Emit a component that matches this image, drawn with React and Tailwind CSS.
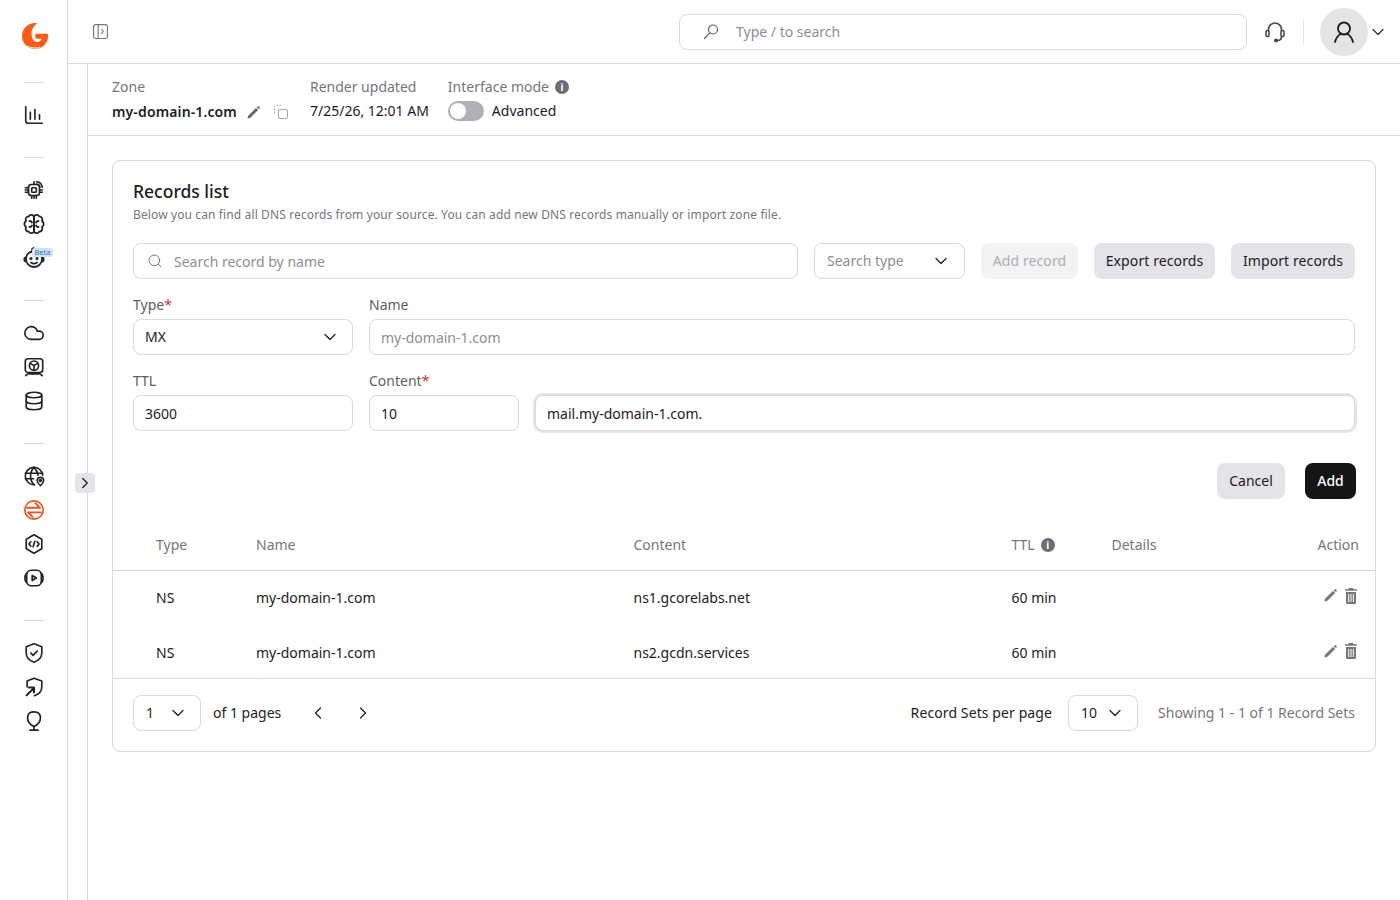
import React from "react";
import { ChevronDown, ChevronLeft, ChevronRight, Search, Cloud } from "lucide-react";

const Icon = ({ children, className = "w-[22px] h-[22px] text-[#222]" }) => (
  <svg viewBox="0 0 24 24" fill="none" stroke="currentColor" strokeWidth="1.8" strokeLinecap="round" strokeLinejoin="round" className={className}>
    {children}
  </svg>
);

const Logo = () => (
  <svg viewBox="0 0 26 30" className="w-[26px] h-[30px]">
    <circle cx="13" cy="15" r="13" fill="#ff5a14" />
    <path d="M20.500 0 C14 1.500 9.500 6.500 9.500 13 C9.500 17.500 12 21 15.500 21 C17.500 21 19 19.800 19.500 17.800 L14.500 17.800 C13 16.500 12.800 14.500 13.800 12.800 L27 12.800 L27 0 Z" fill="#fff" />
    <path d="M3 23.500 C8 27 15 27.500 21 25 C15 28.800 8 28.500 3 23.500 Z" fill="#fff" />
  </svg>
);

const ChartIcon = () => (
  <Icon>
    <path d="M3 3v15.500A2.500 2.500 0 0 0 5.500 21H21" />
    <path d="M8 16.500V9M13 16.500V6M18 16.500v-5" />
  </Icon>
);

const ChipIcon = () => (
  <Icon>
    <rect x="6" y="6" width="12" height="12" rx="3" />
    <rect x="9.500" y="9.500" width="5" height="5" rx="1" />
    <path d="M2.500 9.500H6M2.500 12H6M2.500 14.500H6M9.500 18v3M12 18v3M14.500 18v3M18 14.500h3M18 12h3M12 6V3" />
    <path d="M15 3c3 .3 5.500 2.800 6 6M15 5.500c1.500.2 3 1.600 3.500 3" />
  </Icon>
);

const BrainIcon = () => (
  <Icon className="w-6 h-6 text-[#222]">
    <path d="M12 4.800C11.500 2.500 8 2 6.800 4.300 4.300 4.300 3 6.800 4 9 1.800 10.300 1.800 13.700 4 15c-1 2.300.3 4.700 2.800 4.700C8 22 11.500 21.500 12 19.200z" />
    <path d="M12 4.800C12.500 2.500 16 2 17.200 4.300 19.700 4.300 21 6.800 20 9c2.200 1.300 2.200 4.700 0 6 1 2.300-.3 4.700-2.800 4.700C16 22 12.500 21.500 12 19.200z" />
    <path d="M12 4.800v14.400M7.500 9c1.200 0 2 .5 2.500 1.500M16.500 9c-1.200 0-2 .5-2.500 1.500M7.500 15c1.200 0 2-.5 2.500-1.500M16.500 15c-1.200 0-2-.5-2.500-1.500" />
  </Icon>
);

const BotIcon = () => (
  <Icon className="w-6 h-6 text-[#222]">
    <path d="M11 5.500c-4.300.4-7 3.600-7 7.500 0 4.300 3.500 8 8 8s8-3.700 8-8c0-1.200-.3-2.300-.8-3.300" />
    <path d="M11 5.500C9.500 4.500 9.700 2.500 11.500 2" />
    <path d="M4 11.500c-2 0-2.500 3.500 0 4M20 11.500c2 0 2.500 3.500 0 4" />
    <path d="M9 16.500c1.800 1.300 4.200 1.300 6 0" />
    <circle cx="9" cy="12.500" r=".7" fill="currentColor" />
    <circle cx="15" cy="12.500" r=".7" fill="currentColor" />
  </Icon>
);

const MonitorIcon = () => (
  <Icon>
    <rect x="2.500" y="3" width="19" height="15" rx="3" />
    <circle cx="12" cy="10.500" r="5" />
    <path d="M12 10.500V15M12 10.500 8 8M12 10.500l4-2.500" />
    <path d="M3 21.500 7 18.500M21 21.500l-4-3M7 19.500h10" />
  </Icon>
);

const DatabaseIcon = () => (
  <Icon>
    <ellipse cx="12" cy="5.500" rx="8.500" ry="3" />
    <path d="M3.500 5.500v13c0 1.700 3.800 3 8.500 3s8.500-1.300 8.500-3v-13" />
    <path d="M3.500 12c0 1.700 3.800 3 8.500 3s8.500-1.300 8.500-3" />
  </Icon>
);

const GlobePinIcon = () => (
  <Icon>
    <path d="M12.500 21.500A9.500 9.500 0 1 1 21.500 11" />
    <path d="M2.500 9h19M2.500 15h9M12 2.500c-5 5-5 14 0 19M12 2.500c2.500 2.500 4 5.500 4.300 8.500" />
    <path d="M19 22.500s3.500-2.800 3.500-5.500a3.500 3.500 0 0 0-7 0c0 2.700 3.500 5.500 3.500 5.500z" fill="#fff" />
    <circle cx="19" cy="17" r="1" />
  </Icon>
);

const SwapIcon = () => (
  <Icon className="w-[22px] h-[22px] text-[#e8531f]">
    <circle cx="12" cy="12" r="10" />
    <path d="M4.500 9.500H18.500L13.500 4.500M19.500 14.500H5.500L10.500 19.500" strokeWidth="2" />
  </Icon>
);

const CodeIcon = () => (
  <Icon>
    <path d="M12 2 20.500 6.800v10.400L12 22l-8.500-4.800V6.800z" />
    <path d="M8.500 9.500 6.500 12l2 2.500M15.500 9.500l2 2.500-2 2.500M13 9l-2 6" />
  </Icon>
);

const PlayIcon = () => (
  <Icon>
    <rect x="4" y="3.500" width="16" height="17" rx="5" />
    <path d="M4 7c-2.500 1.500-2.500 8.500 0 10M20 7c2.500 1.500 2.500 8.500 0 10" />
    <path d="M10 9.200v5.600l4.500-2.800z" />
  </Icon>
);

const ShieldCheckIcon = () => (
  <Icon>
    <path d="M12 2 20.500 5.200V12c0 5-3.800 8.300-8.500 10C7.300 20.300 3.500 17 3.500 12V5.200z" />
    <path d="M8.500 12l2.500 2.500 4.500-4.500" />
  </Icon>
);

const ShieldArrowIcon = () => (
  <Icon>
    <path d="M4.500 12V5.500L12 2.500l8.500 3V12c0 5-3.800 8-8 9.500" />
    <path d="M4 21 11.500 13.500M6.500 12.500h5.500V18" strokeWidth="2.200" />
  </Icon>
);

const BulbIcon = () => (
  <Icon>
    <path d="M12 2c4 0 7 1.500 7 6.500 0 5-3.500 8-7 9.500-3.500-1.500-7-4.500-7-9.500C5 3.500 8 2 12 2z" />
    <path d="M12 18v4M7.500 22h9" />
  </Icon>
);

const PencilIcon = ({ className }) => (
  <svg viewBox="0 0 14 14" className={className} fill="currentColor">
    <path d="M0.500 13.500 1.200 10.600 9.800 2 12 4.200 3.400 12.800zM10.600 1.200 11.500.4a.8.8 0 0 1 1.100 0l1 1a.8.8 0 0 1 0 1.100l-.8.900z" />
  </svg>
);

const TrashIcon = () => (
  <svg viewBox="0 0 12 16" className="w-3 h-4 text-[#77757b]" fill="currentColor">
    <path d="M4 0h4l.6 1.200H12v1.600H0V1.200h3.400z" />
    <path fillRule="evenodd" d="M1 4h10v10.500A1.500 1.500 0 0 1 9.500 16h-7A1.500 1.500 0 0 1 1 14.500zM3.200 6v8h1V6zM5.500 6v8h1V6zM7.800 6v8h1V6z" />
  </svg>
);

const InfoDot = () => (
  <span className="inline-flex items-center justify-center w-[14px] h-[14px] rounded-full bg-[#6f6d73] text-white text-[10px] font-bold leading-none">i</span>
);

const Sep = () => <div className="w-5 h-px bg-[#dcdbde] shrink-0" />;

const NavGroup = ({ children }) => (
  <div className="w-full flex flex-col items-center pt-[15px] pb-[25px]">{children}</div>
);

const NavItem = ({ children, badge }) => (
  <div className="relative w-full h-[34px] flex items-center justify-center">
    {children}
    {badge && (
      <span className="absolute left-[32px] top-[7px] w-[21px] text-center rounded-[3px] bg-[#cfe3fb] text-[#2f6fc4] text-[7.5px] leading-[9px]">Beta</span>
    )}
  </div>
);

const fieldClass =
  "h-9 rounded-lg border border-[#d9d8dc] bg-white px-[11px] text-sm text-[#1c1c1e] outline-none placeholder:text-[#8f8d94]";

const records = [
  { type: "NS", name: "my-domain-1.com", content: "ns1.gcorelabs.net", ttl: "60 min" },
  { type: "NS", name: "my-domain-1.com", content: "ns2.gcdn.services", ttl: "60 min" },
];

const colsClass = "grid grid-cols-[100px_377.5px_378px_100px_1fr] pl-[43px]";

export default function App() {
  return (
    <div className="flex w-full h-[900px] overflow-hidden bg-white font-['Noto_Sans',sans-serif] text-sm text-[#1c1c1e]">
      {/* Left nav */}
      <aside className="w-[68px] shrink-0 border-r border-[#d9d8dc] flex flex-col items-center">
        <div className="h-[82px] shrink-0 flex items-start justify-center pt-[21px] pl-[3px]">
          <Logo />
        </div>
        <Sep />
        <NavGroup><NavItem><ChartIcon /></NavItem></NavGroup>
        <Sep />
        <NavGroup>
          <NavItem><ChipIcon /></NavItem>
          <NavItem><BrainIcon /></NavItem>
          <NavItem badge><BotIcon /></NavItem>
        </NavGroup>
        <Sep />
        <NavGroup>
          <NavItem><Cloud className="w-[22px] h-[22px] text-[#222]" strokeWidth={1.8} /></NavItem>
          <NavItem><MonitorIcon /></NavItem>
          <NavItem><DatabaseIcon /></NavItem>
        </NavGroup>
        <Sep />
        <NavGroup>
          <NavItem><GlobePinIcon /></NavItem>
          <NavItem><SwapIcon /></NavItem>
          <NavItem><CodeIcon /></NavItem>
          <NavItem><PlayIcon /></NavItem>
        </NavGroup>
        <Sep />
        <NavGroup>
          <NavItem><ShieldCheckIcon /></NavItem>
          <NavItem><ShieldArrowIcon /></NavItem>
          <NavItem><BulbIcon /></NavItem>
        </NavGroup>
      </aside>

      <div className="flex-1 min-w-0 flex flex-col">
        {/* Top bar */}
        <header className="h-16 shrink-0 border-b border-[#d9d8dc] flex items-center pl-[25px] pr-3">
          <svg viewBox="0 0 16 16" className="w-[15px] h-[15px] text-[#77757b]" fill="none" stroke="currentColor" strokeWidth="1.200">
            <rect x=".6" y=".6" width="14.800" height="14.800" rx="2" />
            <path d="M5.500 1v14M8.800 5.500 11 8l-2.200 2.500" />
          </svg>
          <div className="ml-auto w-[568px] h-9 rounded-lg border border-[#d9d8dc] flex items-center pl-[23px] text-[#8f8d94]">
            <svg viewBox="0 0 16 16" className="w-4 h-4 text-[#5d5b60]" fill="none" stroke="currentColor" strokeWidth="1.200" strokeLinecap="round">
              <circle cx="10" cy="5.500" r="4.500" />
              <path d="M6.800 8.800 1.500 14.500" />
            </svg>
            <span className="ml-[17px] pt-px">Type / to search</span>
          </div>
          <svg viewBox="0 0 24 24" className="w-6 h-6 ml-4 text-[#4a4a4d]" fill="none" stroke="currentColor" strokeWidth="1.600" strokeLinecap="round">
            <path d="M5.500 11V9.500a6.500 6.500 0 0 1 13 0V11" />
            <rect x="3" y="10.500" width="3" height="6" rx="1.200" />
            <rect x="18" y="10.500" width="3" height="6" rx="1.200" />
            <path d="M18.500 16.500c0 2.500-1.500 4-4 4" />
            <circle cx="13" cy="20.500" r="1.300" fill="currentColor" />
          </svg>
          <div className="w-px h-6 bg-[#e3e2e5] ml-4" />
          <div className="ml-4 w-12 h-12 rounded-full bg-[#e4e3e6] flex items-center justify-center">
            <svg viewBox="0 0 24 24" className="w-6 h-6 text-[#1c1c1e]" fill="none" stroke="currentColor" strokeWidth="1.800" strokeLinecap="round">
              <circle cx="12" cy="8.500" r="6" />
              <path d="M3 22c1-4.500 4-7.500 6-8M21 22c-1-4.500-4-7.500-6-8" />
            </svg>
          </div>
          <ChevronDown className="w-5 h-5 text-[#333]" strokeWidth={1.500} />
        </header>

        <div className="flex-1 flex min-h-0">
          {/* Collapsed strip with the overlapping toggle */}
          <div className="relative w-5 shrink-0 border-r border-[#d9d8dc]">
            <button className="absolute left-[7px] top-[409px] w-5 h-5 rounded bg-[#e4e3e8] flex items-center justify-center">
              <ChevronRight className="w-[18px] h-[18px] text-[#222]" strokeWidth={1.800} />
            </button>
          </div>

          <main className="flex-1 min-w-0">
            {/* Zone header */}
            <div className="h-[72px] border-b border-[#d9d8dc] pl-6 pt-[13px] flex gap-[22px]">
              <div>
                <div className="text-[#77757b] leading-5">Zone</div>
                <div className="flex items-center mt-[5px] h-5">
                  <span className="font-semibold leading-5 tracking-[0.13px]">my-domain-1.com</span>
                  <PencilIcon className="w-[13px] h-[13px] ml-[10px] text-[#6b696f]" />
                  <svg viewBox="0 0 14 14" className="w-[14px] h-[14px] ml-[14px] text-[#a9a7ad]" fill="none" stroke="currentColor" strokeWidth="1">
                    <rect x="4.500" y="4.500" width="9" height="9" rx="1.500" />
                    <path d="M.5 8V1.500a1 1 0 0 1 1-1H8" strokeDasharray="1.500 1.500" />
                  </svg>
                </div>
              </div>
              <div>
                <div className="text-[#77757b] leading-5">Render updated</div>
                <div className="mt-1 leading-5">7/25/26, 12:01 AM</div>
              </div>
              <div className="-ml-[3px]">
                <div className="flex items-center gap-[6px] text-[#77757b] leading-5">
                  Interface mode <InfoDot />
                </div>
                <div className="flex items-center gap-2 mt-1 h-5">
                  <div className="w-9 h-5 rounded-full bg-[#b1aeb6] p-[2px]">
                    <div className="w-4 h-4 rounded-full bg-white" />
                  </div>
                  <span>Advanced</span>
                </div>
              </div>
            </div>

            <div className="pl-6 pr-6 pt-6">
              {/* Records card */}
              <section className="h-[592px] rounded-lg border border-[#d9d8dc]">
                <div className="px-5 pt-[17px]">
                  <h2 className="text-[17.5px] font-medium leading-[26px]">Records list</h2>
                  <p className="text-xs text-[#77757b] leading-4 mt-[3px] tracking-[0.12px]">
                    Below you can find all DNS records from your source. You can add new DNS records manually or import zone file.
                  </p>

                  <div className="flex gap-4 mt-5">
                    <div className="flex-1 h-9 rounded-lg border border-[#d9d8dc] flex items-center pl-[13px] text-[#8f8d94]">
                      <Search className="w-4 h-4 text-[#77757b]" strokeWidth={1.500} />
                      <span className="ml-[11px] pt-px">Search record by name</span>
                    </div>
                    <div className="w-[151px] h-9 rounded-lg border border-[#d9d8dc] flex items-center justify-between pl-3 pr-[13px] text-[#8f8d94]">
                      Search type
                      <ChevronDown className="w-5 h-5 text-[#222]" strokeWidth={1.500} />
                    </div>
                    <button className="w-[97px] h-9 rounded-lg bg-[#f3f3f4] text-[#aeacb2] tracking-[0.1px]">Add record</button>
                    <button className="w-[121px] h-9 rounded-lg bg-[#e4e3e8] tracking-[0.1px]">Export records</button>
                    <button className="w-[124px] h-9 rounded-lg bg-[#e4e3e8] tracking-[0.1px]">Import records</button>
                  </div>

                  <div className="flex gap-4 mt-4">
                    <div className="w-[220px]">
                      <label className="block leading-5 mb-1 text-[#5f5d63]">Type<span className="text-[#d1312b]">*</span></label>
                      <div className="h-9 rounded-lg border border-[#d9d8dc] flex items-center justify-between pl-[11px] pr-3">
                        MX
                        <ChevronDown className="w-5 h-5 text-[#222]" strokeWidth={1.500} />
                      </div>
                    </div>
                    <div className="flex-1">
                      <label className="block leading-5 mb-1 text-[#5f5d63]">Name</label>
                      <input className={`${fieldClass} w-full`} placeholder="my-domain-1.com" readOnly />
                    </div>
                  </div>

                  <div className="flex gap-4 mt-4">
                    <div className="w-[220px]">
                      <label className="block leading-5 mb-1 text-[#5f5d63]">TTL</label>
                      <input className={`${fieldClass} w-full`} defaultValue="3600" readOnly />
                    </div>
                    <div className="w-[150px]">
                      <label className="block leading-5 mb-1 text-[#5f5d63]">Content<span className="text-[#d1312b]">*</span></label>
                      <input className={`${fieldClass} w-full`} defaultValue="10" readOnly />
                    </div>
                    <div className="flex-1 pt-6">
                      <input className={`${fieldClass} w-full shadow-[0_0_0_2px_#e6e5ea]`} defaultValue="mail.my-domain-1.com." readOnly />
                    </div>
                  </div>

                  <div className="flex justify-end gap-5 mt-8 -mr-px">
                    <button className="w-[68px] h-9 rounded-lg bg-[#e4e3e8]">Cancel</button>
                    <button className="w-[51px] h-9 rounded-lg bg-[#141414] text-white font-medium">Add</button>
                  </div>
                </div>

                {/* Table */}
                <div className={`${colsClass} h-[72px] items-center pt-[21px] pr-4 border-b border-[#d9d8dc] text-[#77757b]`}>
                  <div>Type</div>
                  <div>Name</div>
                  <div>Content</div>
                  <div className="flex items-center gap-[6px]">TTL <InfoDot /></div>
                  <div className="flex justify-between">
                    <span>Details</span>
                    <span>Action</span>
                  </div>
                </div>
                <div className="border-b border-[#d9d8dc]">
                  {records.map((r) => (
                    <div key={r.content} className={`${colsClass} h-[52px] pt-[2px] first:h-[55px] first:pt-0 first:pb-[2px] items-center pr-[18px]`}>
                      <div>{r.type}</div>
                      <div>{r.name}</div>
                      <div>{r.content}</div>
                      <div>{r.ttl}</div>
                      <div className="flex justify-end items-center gap-2 -mt-1">
                        <PencilIcon className="w-[13px] h-[13px] text-[#77757b]" />
                        <TrashIcon />
                      </div>
                    </div>
                  ))}
                </div>

                {/* Pagination */}
                <div className="flex items-center h-[68px] px-5">
                  <div className="w-[68px] h-9 rounded-lg border border-[#d9d8dc] flex items-center justify-between pl-3 pr-3">
                    1
                    <ChevronDown className="w-5 h-5 text-[#222]" strokeWidth={1.500} />
                  </div>
                  <span className="ml-3">of 1 pages</span>
                  <ChevronLeft className="w-5 h-5 ml-[27px] text-[#222]" strokeWidth={1.500} />
                  <ChevronRight className="w-5 h-5 ml-[25px] text-[#222]" strokeWidth={1.500} />
                  <span className="ml-auto tracking-[0.1px]">Record Sets per page</span>
                  <div className="w-[70px] h-9 ml-4 rounded-lg border border-[#d9d8dc] flex items-center justify-between pl-3 pr-3">
                    10
                    <ChevronDown className="w-5 h-5 text-[#222]" strokeWidth={1.500} />
                  </div>
                  <span className="ml-5 text-[#77757b]">Showing 1 - 1 of 1 Record Sets</span>
                </div>
              </section>
            </div>
          </main>
        </div>
      </div>
    </div>
  );
}
